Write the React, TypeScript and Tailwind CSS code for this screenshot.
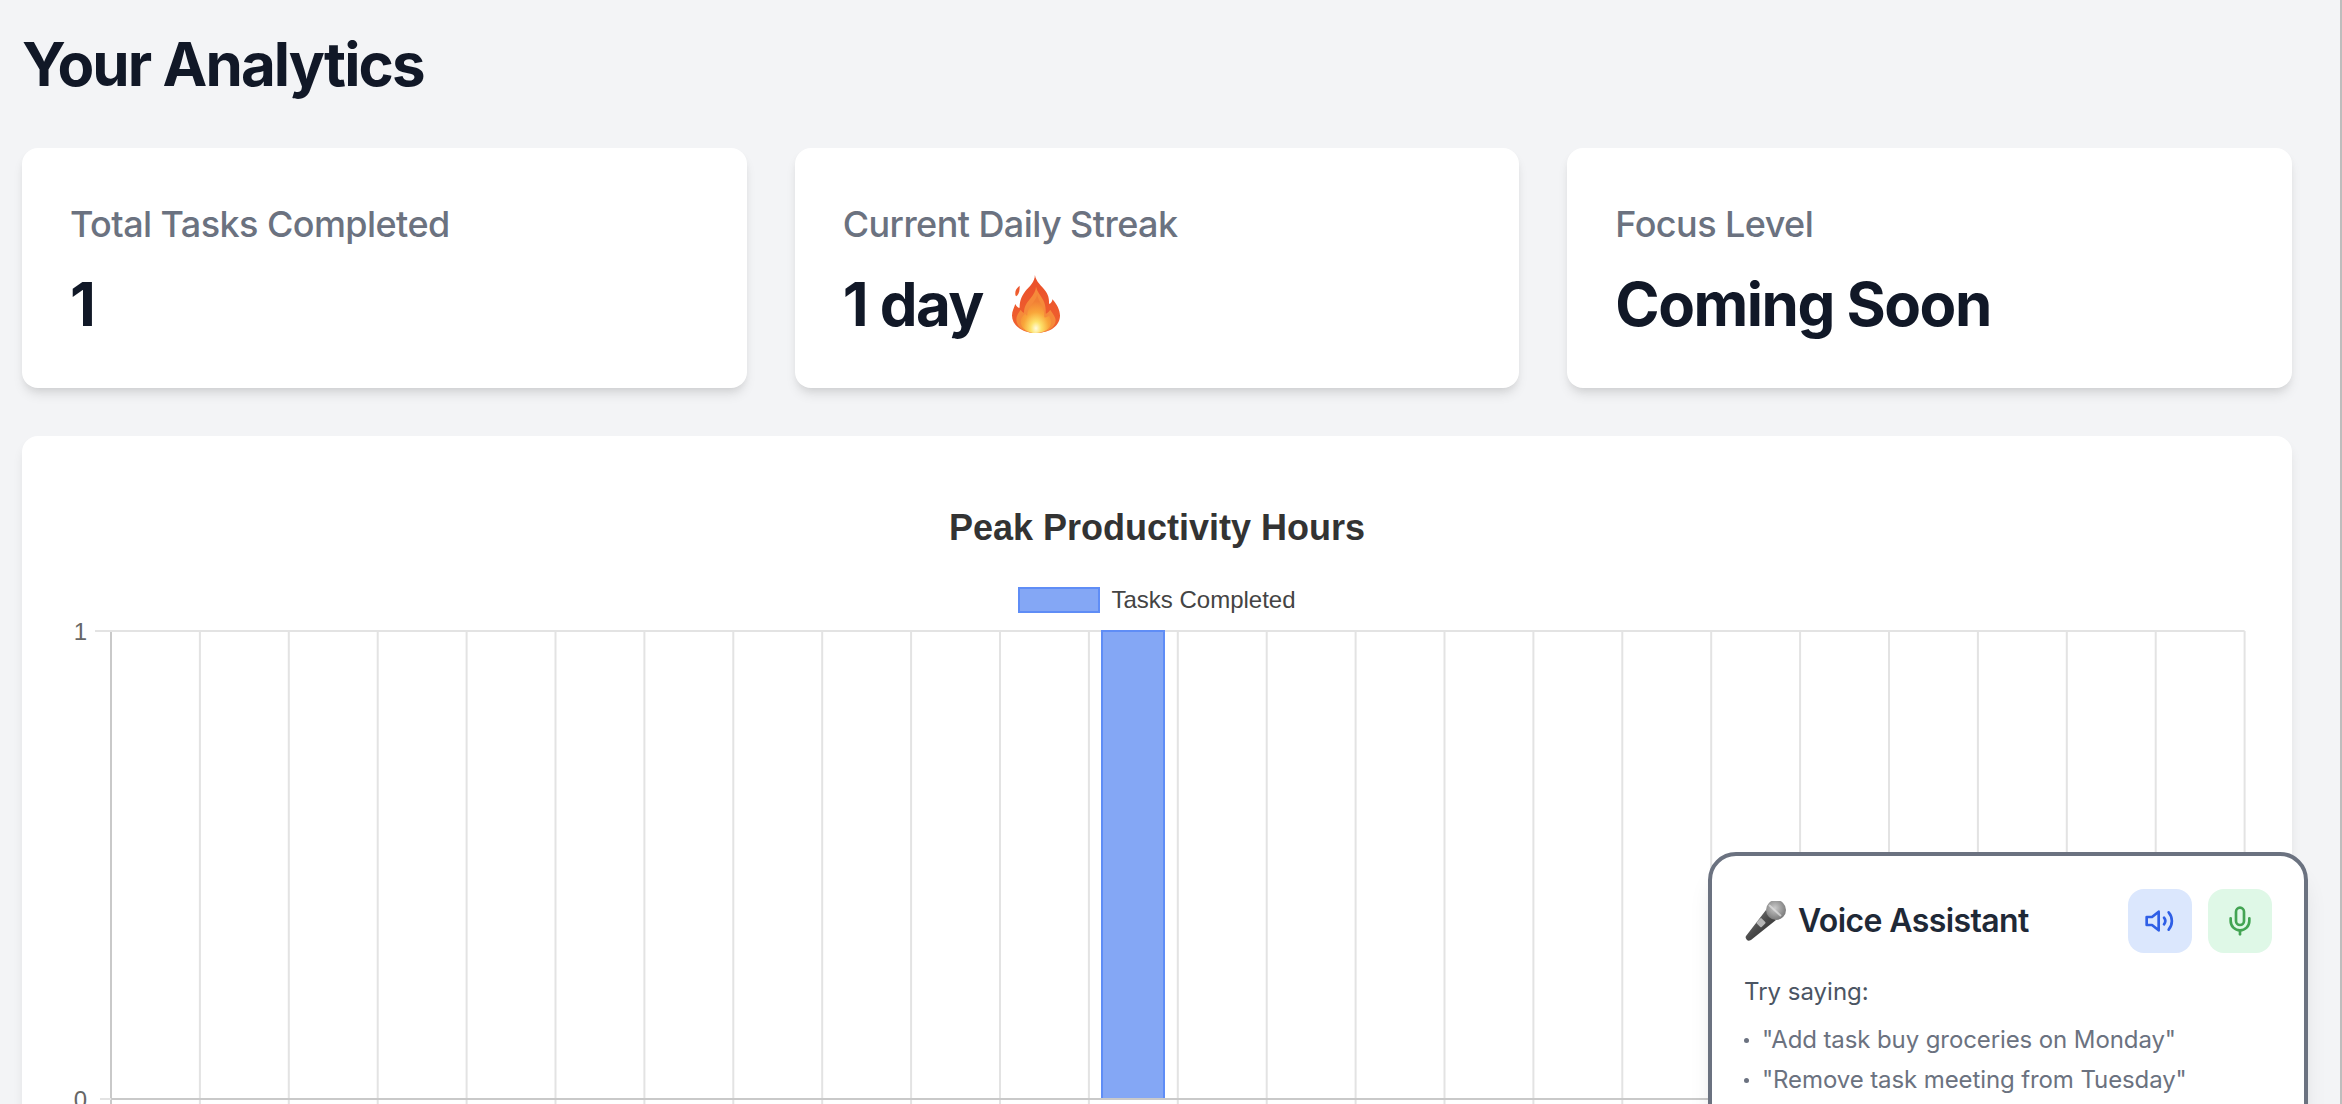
import { Mic } from "lucide-react";

const stats = [
  { label: "Total Tasks Completed", value: "1" },
  { label: "Current Daily Streak", value: "1 day", flame: true },
  { label: "Focus Level", value: "Coming Soon" },
];

const hints = ['"Add task buy groceries on Monday"', '"Remove task meeting from Tuesday"'];

// 24 hourly slots, the bar sits in slot 11
const AXIS_X = 41;
const SLOT = 88.9;
const TOP = 7;
const BOTTOM = 475;

function FlameEmoji() {
  return (
    <svg viewBox="0 0 44 60" preserveAspectRatio="none" className="inline-block w-[48px] h-[58px] ml-[29px] align-[-7px]" aria-hidden>
      <defs>
        <radialGradient id="flameCore" cx="50%" cy="88%" r="70%">
          <stop offset="0%" stopColor="#fffbe0" />
          <stop offset="25%" stopColor="#fde26a" />
          <stop offset="60%" stopColor="#f9a63a" />
          <stop offset="100%" stopColor="#f17f35" />
        </radialGradient>
        <linearGradient id="flameOuter" x1="0" y1="0" x2="0" y2="1">
          <stop offset="0%" stopColor="#ea4f2a" />
          <stop offset="100%" stopColor="#f0622f" />
        </linearGradient>
      </defs>
      <path
        fill="url(#flameOuter)"
        d="M21 0c1 7 6 11 10 17 3 5 3 9 3 13 2-1 3-3 3-5 4 5 7 11 7 17 0 10-8 18-22 18C9 60 0 52 0 42c0-5 2-8 3-12 1 2 2 4 4 4 0-6 1-11 5-17 4-5 9-10 9-17z"
      />
      <path fill="url(#flameOuter)" d="M3 19c0-4 2-6 4-8 0 4 0 8-3 11-1 0-1-2-1-3z" />
      <path
        fill="#f58a3a"
        d="M22 12c1 6 5 10 7 15 2 5 2 10 2 13 2-1 3-2 4-4 3 5 5 8 5 11 0 7-8 13-18 13S4 54 4 46c0-4 2-7 4-10 1 2 2 3 3 3 0-7 3-11 6-15 3-4 5-8 5-12z"
      />
      <path
        fill="url(#flameCore)"
        d="M23 20c1 6 5 11 6 17 1 3 0 6 1 7 2 0 3-1 4-2 1 3 2 5 2 7 0 6-6 11-14 11S8 55 8 48c0-4 2-6 4-8 1 1 1 2 2 2 0-6 3-10 5-13 2-3 4-6 4-9z"
      />
    </svg>
  );
}

function MicEmoji() {
  return (
    <svg viewBox="0 0 42 40" className="ml-[1px] w-[42px] h-[40px] shrink-0" aria-hidden>
      <defs>
        <linearGradient id="micBody" x1="0" y1="0" x2="1" y2="1">
          <stop offset="0%" stopColor="#8a8a8a" />
          <stop offset="50%" stopColor="#4a4a4a" />
          <stop offset="100%" stopColor="#262626" />
        </linearGradient>
        <radialGradient id="micHead" cx="45%" cy="40%" r="65%">
          <stop offset="0%" stopColor="#c9c9c9" />
          <stop offset="100%" stopColor="#727272" />
        </radialGradient>
      </defs>
      <path fill="url(#micBody)" d="M21 9 31 19 6 39c-2 1-3 1-4 0s-2-3-1-4z" />
      <circle cx="31" cy="9" r="10" fill="url(#micHead)" />
      <path d="M24 4 36 15" stroke="#e3e3e3" strokeWidth="2" opacity="0.7" />
      <rect x="13" y="18" width="7" height="7" rx="1" transform="rotate(45 16 21)" fill="#b5b5b5" />
    </svg>
  );
}

function SpeakerIcon() {
  return (
    <svg viewBox="0 0 24 24" className="w-[32px] h-[32px]" fill="none" stroke="#2f5fe6" strokeWidth="2" strokeLinecap="round" strokeLinejoin="round" aria-hidden>
      <path d="M11 5 6 9H2v6h4l5 4V5z" />
      <path d="M15 9.5a4 4 0 0 1 0 5" />
      <path d="M18.5 5.5a10 10 0 0 1 0 13" />
    </svg>
  );
}

function HourChart() {
  const lines = Array.from({ length: 25 }, (_, i) => AXIS_X + i * SLOT);
  return (
    <svg width="2175" height="480" className="block overflow-visible font-['Liberation_Sans',sans-serif]">
      {lines.map((x, i) => (
        <line key={x} x1={x} x2={x} y1={TOP} y2={480} stroke={i === 0 ? "#c9c9c9" : "#e3e3e3"} strokeWidth="2" />
      ))}
      <line x1={25} x2={lines[24]} y1={TOP} y2={TOP} stroke="#e3e3e3" strokeWidth="2" />
      <line x1={30} x2={AXIS_X} y1={BOTTOM} y2={BOTTOM} stroke="#e3e3e3" strokeWidth="2" />
      <rect
        x={1032}
        y={TOP}
        width={62}
        height={BOTTOM - TOP}
        fill="#84a7f5"
        stroke="#5f8df6"
        strokeWidth="2"
      />
      <line x1={AXIS_X} x2={lines[24]} y1={BOTTOM} y2={BOTTOM} stroke="#c9c9c9" strokeWidth="2" />
      <text x="17" y="16" textAnchor="end" fontSize="24" fill="#666">1</text>
      <text x="17" y="484" textAnchor="end" fontSize="24" fill="#666">0</text>
    </svg>
  );
}

export default function App() {
  return (
    <div className="relative h-[1104px] overflow-hidden border-r-2 border-[#bdbdbd] bg-[#f3f4f6] pl-[22px] pr-[48px] pt-[28px] font-['Inter',sans-serif]">
      <h1 className="text-[60px] leading-[72px] font-bold tracking-[-1.9px] text-[#111827]">Your Analytics</h1>

      <div className="mt-[48px] grid grid-cols-3 gap-[48px]">
        {stats.map((s) => (
          <div key={s.label} className="h-[240px] rounded-2xl bg-white p-[48px] shadow-[0_8px_12px_-2px_rgba(0,0,0,0.1),0_4px_8px_-4px_rgba(0,0,0,0.1)]">
            <p className="text-[36px] leading-[56px] font-medium tracking-[-0.57px] text-[#6b7280]">{s.label}</p>
            <p className="mt-[16px] text-[60px] leading-[72px] font-bold tracking-[-1.5px] text-[#111827]">
              {s.value}
              {s.flame && <FlameEmoji />}
            </p>
          </div>
        ))}
      </div>

      <div className="mt-[48px] h-[800px] rounded-2xl bg-white px-[48px] pt-[48px] shadow-[0_8px_12px_-2px_rgba(0,0,0,0.1)]">
        <h2 className="flex h-[88px] items-center justify-center font-['Liberation_Sans',sans-serif] text-[36px] font-bold text-[#333333]">
          Peak Productivity Hours
        </h2>
        <div className="mt-[3px] flex h-[50px] items-center justify-center gap-[11px] font-['Liberation_Sans',sans-serif] text-[24px] text-[#444444]">
          <span className="h-[26px] w-[82px] border-2 border-[#5f8df6] bg-[#84a7f5]" />
          Tasks Completed
        </div>
        <div className="-mt-[1px]">
          <HourChart />
        </div>
      </div>

      <div className="absolute right-[32px] top-[852px] h-[400px] w-[600px] rounded-[28px] border-4 border-[#6b7280] bg-white p-[32px] shadow-xl">
        <div className="flex items-center justify-between pt-[1px]">
          <div className="flex items-center gap-[11px]">
            <MicEmoji />
            <span className="text-[32px] font-semibold tracking-[-0.6px] text-[#1f2937]">Voice Assistant</span>
          </div>
          <div className="flex gap-[16px]">
            <button className="flex h-[64px] w-[64px] items-center justify-center rounded-2xl bg-[#dbe7fd]">
              <SpeakerIcon />
            </button>
            <button className="flex h-[64px] w-[64px] items-center justify-center rounded-2xl bg-[#dff8e7]">
              <Mic size={32} color="#43a453" strokeWidth={2} />
            </button>
          </div>
        </div>
        <p className="mt-[19px] text-[24px] leading-[40px] text-[#4b5563]">Try saying:</p>
        <ul className="mt-[8px] text-[24px] leading-[40px] tracking-[-0.1px] text-[#6b7280]">
          {hints.map((h) => (
            <li key={h} className="flex items-center">
              <span className="mr-[13px] h-[5px] w-[5px] rounded-full bg-[#6b7280]" />
              {h}
            </li>
          ))}
        </ul>
      </div>
    </div>
  );
}
